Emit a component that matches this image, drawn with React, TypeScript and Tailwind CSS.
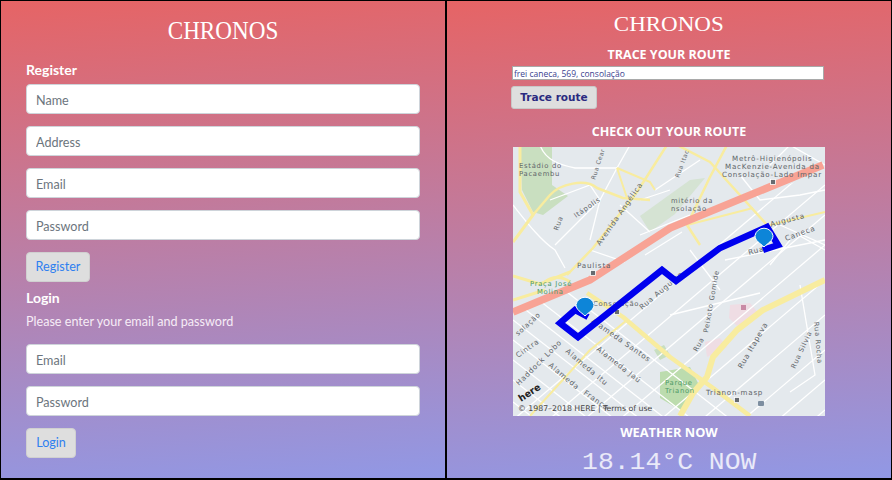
import React from "react";

const sans = "font-['Lato','Open_Sans',sans-serif]";
const wide = "font-['Open_Sans','Noto_Sans',sans-serif]";
const mono = "font-['Liberation_Mono',monospace]";
const serif = "font-['Liberation_Serif',serif]";

const yellowRoads = [
  { d: "M667 145L637 192L593 248L567 275", w: 2.5 },
  { d: "M520 145L520 192L533 215L513 242", w: 3 },
  { d: "M533 215L550 195C560 184 585 178 597 188L623 198L650 200", w: 2.5 },
  { d: "M617 168L627 198M617 168L650 182L655 190", w: 2 },
  { d: "M677 145L710 162L767 225", w: 2.5 },
  { d: "M727 145L710 177L687 225L700 245", w: 2.5 },
  { d: "M687 225L753 208", w: 2 },
  { d: "M770 225L825 212", w: 2 },
  { d: "M825 280L763 310L737 330L713 357L707 377L693 393L680 416", w: 6 },
  { d: "M587 293L623 317L670 357L713 388L750 416", w: 4.5 },
  { d: "M530 416L590 350L627 320", w: 2 },
  { d: "M513 276L540 284L570 272", w: 3 },
  { d: "M545 282C552 276 562 276 570 282M513 300L545 290", w: 3 },
];

const whiteRoads = [
  "M513 205C525 220 540 240 555 250L565 268",
  "M540 145C545 160 560 165 575 168L617 168",
  "M550 200L590 185L600 200L575 225L555 245",
  "M630 145L617 168L600 200L590 240",
  "M620 205L650 232M590 250L625 262M640 200L670 190",
  "M655 190L700 160M640 235L690 215M645 255L682 232",
  "M740 175L760 200L800 195L825 190M770 165L790 145M790 145L825 165",
  "M780 225L825 245M790 240L770 265M800 236L825 250",
  "M690 250L720 290M725 260L775 250L825 240",
  "M670 315L760 293M800 285L815 375L790 392",
];

const gridDown = [250, 280, 300, 320, 340, 360, 380, 402, 424, 446];
const gridUp = [720, 750, 780, 810, 845, 880, 915, 945, 975, 1010, 1050, 1090];

const labels = [
  { t: "Estádio do", x: 519, y: 168, r: 0, s: 8 },
  { t: "Pacaembu", x: 519, y: 176, r: 0, s: 8 },
  { t: "Rua Cear", x: 595, y: 180, r: -72, s: 7 },
  { t: "Itápolis", x: 576, y: 218, r: -35, s: 8 },
  { t: "Rua", x: 558, y: 231, r: -70, s: 8 },
  { t: "Avenida Angélica", x: 600, y: 246, r: -55, s: 8.600 },
  { t: "Paulista", x: 577, y: 268, r: 0, s: 8.500 },
  { t: "Praça José", x: 530, y: 286, r: 0, s: 8, c: "#4d9966" },
  { t: "Molina", x: 537, y: 294, r: 0, s: 8, c: "#4d9966" },
  { t: "mitério da", x: 671, y: 203, r: 0, s: 8 },
  { t: "nsolação", x: 671, y: 211, r: 0, s: 8 },
  { t: "Rua Itac", x: 679, y: 178, r: -70, s: 7 },
  { t: "Metrô-Higienópolis", x: 732, y: 161, r: 0, s: 8.400 },
  { t: "MacKenzie-Avenida da", x: 725, y: 169, r: 0, s: 8.400 },
  { t: "Consolação-Lado Impar", x: 722, y: 177, r: 0, s: 8.400 },
  { t: "Augusta", x: 771, y: 227, r: -15, s: 8.600 },
  { t: "Rua", x: 749, y: 255, r: -15, s: 8.600 },
  { t: "Caneca", x: 786, y: 241, r: -20, s: 8.600 },
  { t: "Consolação", x: 593, y: 306, r: 0, s: 8 },
  { t: "solação", x: 518, y: 336, r: -42, s: 8 },
  { t: "Rua Augusta", x: 642, y: 310, r: -40, s: 8.600 },
  { t: "Alameda Santos", x: 591, y: 322, r: 35, s: 8.600 },
  { t: "Alameda Jaú", x: 596, y: 350, r: 38, s: 8.600 },
  { t: "Alameda Itu", x: 565, y: 352, r: 40, s: 8.600 },
  { t: "Alameda", x: 548, y: 366, r: 40, s: 8.600 },
  { t: "Franca", x: 583, y: 394, r: 35, s: 8.600 },
  { t: "Haddock Lobo", x: 519, y: 386, r: -45, s: 8.600 },
  { t: "Cintra", x: 518, y: 358, r: -35, s: 8.600 },
  { t: "Rua", x: 697, y: 352, r: -60, s: 8 },
  { t: "Peixoto Gomide", x: 708, y: 333, r: -80, s: 8 },
  { t: "Rua Itapeva", x: 742, y: 369, r: -60, s: 8.600 },
  { t: "Rua Silvia", x: 795, y: 369, r: -65, s: 8 },
  { t: "Rua Rocha", x: 814, y: 322, r: 85, s: 8 },
  { t: "Parque", x: 665, y: 385, r: 0, s: 8, c: "#4d9966" },
  { t: "Trianon", x: 665, y: 393, r: 0, s: 8, c: "#4d9966" },
  { t: "Trianon-masp", x: 706, y: 395, r: 0, s: 8.400 },
];

const stations = [
  [593, 273],
  [773, 182],
  [617, 312],
  [737, 400],
];

function CityMap() {
  return (
    <svg viewBox="513 147 312 269" className="block h-[269px] w-[312px]">
      <defs>
        <clipPath id="lower">
          <polygon points="513,312 590,282 670,232 825,170 825,416 513,416" />
        </clipPath>
      </defs>
      <rect x="513" y="147" width="312" height="269" fill="#e4e9ed" />

      {/* parks */}
      <path d="M520 147L552 147L552 185L568 196L543 215L533 212L522 190Z" fill="#c9dfc0" />
      <path d="M640 216L690 180L705 178L675 214L650 232Z" fill="#d5e3d3" />
      <path d="M730 305L750 303L760 315L737 326L729 318Z" fill="#efdde4" />
      <path d="M705 342L720 338L727 347L707 357Z" fill="#efdde4" />
      <path d="M660 372L690 367L700 387L680 410L660 398Z" fill="#bcdcae" />
      <path d="M654 350L664 345L670 355L660 360Z" fill="#c8dfc0" />

      <g clipPath="url(#lower)" stroke="#fff" strokeWidth="1.300" fill="none">
        {gridDown.map((y0) => (
          <line key={y0} x1="513" y1={y0} x2="825" y2={y0 + 243} />
        ))}
        {gridUp.map((y0) => (
          <line key={y0} x1="513" y1={y0 - 300} x2="825" y2={y0 - 300 - 265} />
        ))}
      </g>
      <g stroke="#fff" strokeWidth="1.300" fill="none">
        {whiteRoads.map((d) => (
          <path key={d} d={d} />
        ))}
      </g>

      <g stroke="#f8ec9f" fill="none" strokeLinejoin="round">
        {yellowRoads.map((r) => (
          <path key={r.d} d={r.d} strokeWidth={r.w} />
        ))}
      </g>
      <path d="M513 312L590 280L670 228L823 165" stroke="#f8a395" strokeWidth="7.500" fill="none" />

      <g fontFamily="'DejaVu Sans', sans-serif">
        {labels.map((l) => (
          <text
            key={l.t + l.x}
            x={l.x}
            y={l.y}
            fontSize={l.s * 0.85}
            letterSpacing={l.s * 0.09}
            fill={l.c ?? "#5f6569"}
            transform={l.r ? `rotate(${l.r} ${l.x} ${l.y})` : undefined}
          >
            {l.t}
          </text>
        ))}
        <text x="518" y="411" fontSize="7.800" fill="#444">© 1987–2018 HERE | Terms of use</text>
        <text x="521" y="402" fontSize="9.500" fontWeight="700" fill="#222" transform="rotate(-33 521 402)">here</text>
      </g>

      {/* station and place icons */}
      {stations.map(([x, y]) => (
        <rect key={x} x={x - 2.500} y={y - 2.500} width="5" height="5" fill="#666b70" stroke="#fff" strokeWidth="0.800" />
      ))}
      <rect x="741" y="305" width="5" height="5" fill="#c98aa5" />
      <rect x="758" y="401" width="6" height="5" rx="1" fill="#7d8ea0" />

      {/* route */}
      <path
        d="M588 317L575 310L560 323L578 337L662 270L676 281L720 248L767 227L778 245L763 250"
        stroke="#0000ee"
        strokeWidth="6.500"
        fill="none"
        strokeLinejoin="miter"
      />
      {/* markers */}
      <path d="M585 316C581 312 576 310 576 304.500A9.200 9.200 0 0 1 594 304.500C594 310 589 312 585 316Z" fill="#0d85d8" stroke="#fff" />
      <path d="M764 247C760 243 755 241 755 235.500A9.200 9.200 0 0 1 773 235.500C773 241 768 243 764 247Z" fill="#0d85d8" stroke="#fff" />
    </svg>
  );
}

function Field({ placeholder }: { placeholder: string }) {
  return (
    <input
      placeholder={placeholder}
      className="block h-[30px] w-full rounded-[4px] border border-[#ced4da] bg-white px-[9px] pt-[2px] text-[12.600px] placeholder:text-[#6c757d]"
    />
  );
}

function GrayButton({ label, className }: { label: string; className: string }) {
  return (
    <button className={`block h-[30px] rounded-[4px] border border-[#d0d0d0] bg-[#dedede] text-[12.600px] text-[#2f80f0] ${className}`}>
      {label}
    </button>
  );
}

export default function App() {
  return (
    <div className={`flex h-[480px] w-[892px] gap-[2px] bg-black px-px pt-px pb-[2px] ${sans}`}>
      {/* left panel */}
      <div className="flex h-full w-[444px] flex-col bg-[linear-gradient(176deg,#e66465,#9198e5)] pr-[25px] pl-[25px] text-white">
        <h1 className={`mt-[15px] h-[36px] origin-center scale-x-[0.89] text-center text-[26px] leading-[30px] ${serif}`}>CHRONOS</h1>
        <h2 className="mt-[8px] text-[14px] leading-[20px] font-bold">Register</h2>
        <div className="mt-[4px] flex flex-col gap-[12px]">
          <Field placeholder="Name" />
          <Field placeholder="Address" />
          <Field placeholder="Email" />
          <Field placeholder="Password" />
        </div>
        <GrayButton label="Register" className="mt-[12px] w-[64px]" />
        <h2 className="mt-[6px] text-[14px] leading-[20px] font-bold">Login</h2>
        <p className="mt-[4px] text-[12.600px] leading-[20px] text-[#f6ecf6]">Please enter your email and password</p>
        <div className="mt-[12px] flex flex-col gap-[12px]">
          <Field placeholder="Email" />
          <Field placeholder="Password" />
        </div>
        <GrayButton label="Login" className="mt-[12px] w-[50px]" />
      </div>

      {/* right panel */}
      <div className={`flex h-full w-[444px] flex-col items-center bg-[linear-gradient(176deg,#e66465,#9198e5)] text-white ${wide}`}>
        <h1 className={`mt-[12px] h-[22px] origin-center scale-x-[1.15] text-[20px] leading-[22px] ${serif}`}>CHRONOS</h1>
        <h2 className="mt-[12px] text-[12.500px] leading-[16px] font-bold">TRACE YOUR ROUTE</h2>
        <div className="mt-[3px] flex w-[312px] flex-col">
          <input
            readOnly
            value="frei caneca, 569, consolação"
            className="-ml-px h-[14px] w-[312px] border border-[#a9a9a9] bg-white px-[1px] text-[8.500px] text-[#3b3f8f]"
          />
          <button className="mt-[6px] -ml-[2px] h-[23px] w-[86px] rounded-[3px] border border-[#c8c8c8] bg-[#dedede] text-[10.500px] font-bold text-[#2b2a80] font-['DejaVu_Sans',sans-serif]">
            Trace route
          </button>
        </div>
        <h2 className="mt-[15px] text-[12.500px] leading-[16px] font-bold">CHECK OUT YOUR ROUTE</h2>
        <div className="mt-[7px]">
          <CityMap />
        </div>
        <h2 className="mt-[8px] text-[12.800px] leading-[16px] font-bold">WEATHER NOW</h2>
        <p className={`mt-[10px] origin-center scale-x-[1.1] text-[24px] leading-[26px] text-white/80 ${mono}`}>18.14°C NOW</p>
      </div>
    </div>
  );
}
